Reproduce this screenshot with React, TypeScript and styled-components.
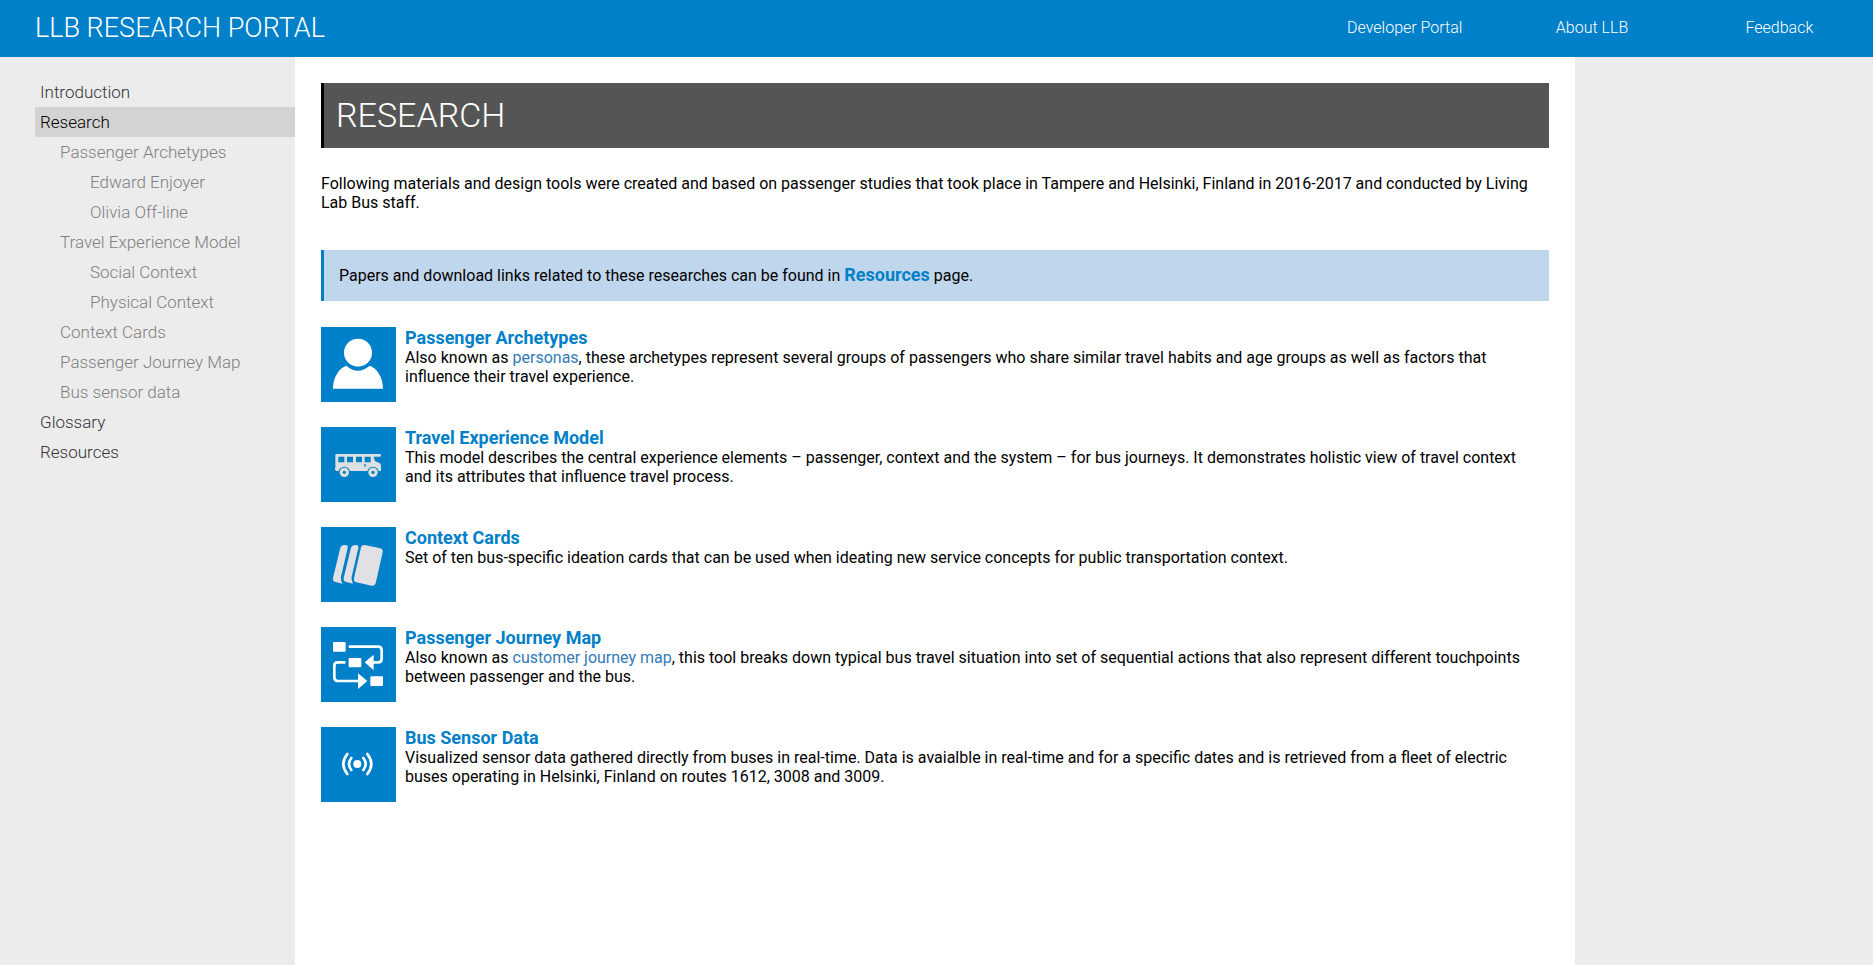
import React from "react";
import styled, { createGlobalStyle } from "styled-components";

const BLUE = "#0080c8";

const GlobalStyle = createGlobalStyle`
  * { box-sizing: border-box; }
  body {
    margin: 0;
    background: #ececec;
    font-family: Roboto, "Liberation Sans", sans-serif;
    font-size: 16px;
    line-height: 19px;
    color: #000;
  }
  a { text-decoration: none; }
`;

const Page = styled.div`
  min-height: 100vh;
  display: flex;
  flex-direction: column;
`;

const Header = styled.header`
  display: flex;
  align-items: center;
  height: 57px;
  background: ${BLUE};
`;

const Brand = styled.a`
  flex: 1;
  padding: 0 0 2px 35px;
  color: #fff;
  font-size: 27px;
  font-weight: 300;
  line-height: 32px;
`;

const TopNav = styled.nav`
  display: grid;
  grid-template-columns: repeat(3, 1fr);
  width: 30%;
  padding-bottom: 2px;
`;

const TopLink = styled.a`
  color: #fff;
  font-weight: 300;
  text-align: center;
`;

const Body = styled.div`
  flex: 1;
  display: flex;
`;

const Sidebar = styled.nav`
  flex: 0 0 295px;
  padding: 20px 0 20px 35px;
`;

const MenuLink = styled.a<{ $level: number; $active?: boolean }>`
  display: block;
  padding-left: ${(p) => [5, 25, 55][p.$level]}px;
  background: ${(p) => (p.$active ? "#d3d3d3" : "transparent")};
  color: ${(p) => (p.$active ? "#000" : p.$level === 0 ? "#333" : "#808080")};
  font-size: 17px;
  font-weight: 300;
  line-height: 30px;
`;

const Main = styled.main`
  flex: 0 1 1280px;
  padding: 26px;
  background: #fff;
`;

const Title = styled.h1`
  margin: 0 0 26px;
  padding: 12px;
  border-left: 3px solid #000;
  background: #555;
  color: #fff;
  font-size: 34px;
  font-weight: 300;
  line-height: 41px;
`;

const Intro = styled.p`
  margin: 0 0 38px;
`;

const Callout = styled.p`
  margin: 0 0 26px;
  padding: 16px 15px;
  border-left: 3px solid ${BLUE};
  background: #c0d6ec;
`;

const StrongLink = styled.a`
  color: ${BLUE};
  font-size: 18px;
  font-weight: 700;
  line-height: 16px;
`;

const TextLink = styled.a`
  color: #337ab7;
`;

const Topics = styled.div`
  display: flex;
  flex-direction: column;
  gap: 25px;
`;

const Topic = styled.article`
  display: flex;
  gap: 9px;
  padding-right: 20px;
`;

const Tile = styled.svg`
  flex: none;
  width: 75px;
  height: 75px;
  background: ${BLUE};
`;

const TopicTitle = styled.h2`
  margin: 0;
  font-size: 18px;
  line-height: 21px;
`;

const TopicText = styled.p`
  margin: 0;
`;

const PersonIcon = () => (
  <Tile viewBox="0 0 225 225" aria-hidden="true">
    <path d="M36 185C36 150 54 124 76 116Q110 146 146 116C168 124 186 150 186 185Z" fill="#fff" />
    <circle cx="111" cy="77" r="47" fill={BLUE} />
    <circle cx="111" cy="77" r="42" fill="#fff" />
  </Tile>
);

const BusIcon = () => (
  <Tile viewBox="0 0 225 225" aria-hidden="true">
    <path
      d="M46 81H176Q180 81 180 85T176 89H158L162 102L176 109Q180 111 180 115V132H46L42 128V121H45L43 118V85Q43 81 46 81Z"
      fill="#dde0e0"
    />
    <path d="M52 89h18v17H52zM78 89h18v17H78zM105 89h18v17H105zM131 89h18v17H131zM130 111h4v8h-4z" fill={BLUE} />
    {[70, 156].map((x) => (
      <g key={x}>
        <circle cx={x} cy="136" r="17" fill={BLUE} />
        <circle cx={x} cy="136" r="14" fill="#dde0e0" />
        <circle cx={x} cy="136" r="5" fill={BLUE} />
      </g>
    ))}
  </Tile>
);

const CardsIcon = () => (
  <Tile viewBox="0 0 225 225" fill="#e1e1e5" aria-hidden="true">
    <path d="M58 62Q61 54 69 54L77 55Q81 57 80 63L60 149Q58 160 64 170L44 165Q34 162 36 153Z" />
    <path d="M90 62Q93 54 101 54L109 55Q113 57 112 63L92 149Q90 160 96 170L76 165Q66 162 68 153Z" />
    <path d="M131 54L178 64Q187 67 185 76L164 169Q161 178 152 176L106 166Q97 163 99 154L120 61Q123 53 131 54Z" />
  </Tile>
);

const JourneyIcon = () => (
  <Tile viewBox="0 0 225 225" fill="#fff" aria-hidden="true">
    <rect x="36" y="45" width="38" height="29" rx="3" />
    <rect x="83" y="93" width="38" height="28" rx="3" />
    <rect x="148" y="148" width="38" height="29" rx="3" />
    <path
      d="M83 59H171Q182 59 182 70V95Q182 106 171 106H152M73 106H50Q40 106 40 116V151Q40 162 50 162H116"
      fill="none"
      stroke="#fff"
      strokeWidth="8"
    />
    <path d="M131 106L158 83V130ZM139 162L111 139V186Z" />
  </Tile>
);

const SensorIcon = () => (
  <Tile viewBox="0 0 225 225" fill="none" stroke="#fff" strokeWidth="8" strokeLinecap="round" aria-hidden="true">
    <circle cx="109" cy="111" r="12" fill="#fff" stroke="none" />
    <path d="M91 93Q77 111 91 129M127 93Q141 111 127 129M79 81Q55 111 79 141M139 81Q163 111 139 141" />
  </Tile>
);

const menu = [
  { label: "Introduction", level: 0 },
  { label: "Research", level: 0, active: true },
  { label: "Passenger Archetypes", level: 1 },
  { label: "Edward Enjoyer", level: 2 },
  { label: "Olivia Off-line", level: 2 },
  { label: "Travel Experience Model", level: 1 },
  { label: "Social Context", level: 2 },
  { label: "Physical Context", level: 2 },
  { label: "Context Cards", level: 1 },
  { label: "Passenger Journey Map", level: 1 },
  { label: "Bus sensor data", level: 1 },
  { label: "Glossary", level: 0 },
  { label: "Resources", level: 0 },
];

const topics = [
  {
    title: "Passenger Archetypes",
    icon: <PersonIcon />,
    text: (
      <>
        Also known as <TextLink href="#personas">personas</TextLink>, these archetypes represent several groups of
        passengers who share similar travel habits and age groups as well as factors that influence their travel
        experience.
      </>
    ),
  },
  {
    title: "Travel Experience Model",
    icon: <BusIcon />,
    text: "This model describes the central experience elements – passenger, context and the system – for bus journeys. It demonstrates holistic view of travel context and its attributes that influence travel process.",
  },
  {
    title: "Context Cards",
    icon: <CardsIcon />,
    text: "Set of ten bus-specific ideation cards that can be used when ideating new service concepts for public transportation context.",
  },
  {
    title: "Passenger Journey Map",
    icon: <JourneyIcon />,
    text: (
      <>
        Also known as <TextLink href="#journey">customer journey map</TextLink>, this tool breaks down typical bus
        travel situation into set of sequential actions that also represent different touchpoints between passenger
        and the bus.
      </>
    ),
  },
  {
    title: "Bus Sensor Data",
    icon: <SensorIcon />,
    text: "Visualized sensor data gathered directly from buses in real-time. Data is avaialble in real-time and for a specific dates and is retrieved from a fleet of electric buses operating in Helsinki, Finland on routes 1612, 3008 and 3009.",
  },
];

export default function App() {
  return (
    <Page>
      <GlobalStyle />
      <Header>
        <Brand href="#home">LLB RESEARCH PORTAL</Brand>
        <TopNav>
          <TopLink href="#developer">Developer Portal</TopLink>
          <TopLink href="#about">About LLB</TopLink>
          <TopLink href="#feedback">Feedback</TopLink>
        </TopNav>
      </Header>
      <Body>
        <Sidebar>
          {menu.map((item) => (
            <MenuLink key={item.label} href="#" $level={item.level} $active={item.active}>
              {item.label}
            </MenuLink>
          ))}
        </Sidebar>
        <Main>
          <Title>RESEARCH</Title>
          <Intro>
            Following materials and design tools were created and based on passenger studies that took place in Tampere
            and Helsinki, Finland in 2016-2017 and conducted by Living Lab Bus staff.
          </Intro>
          <Callout>
            Papers and download links related to these researches can be found in{" "}
            <StrongLink href="#resources">Resources</StrongLink> page.
          </Callout>
          <Topics>
            {topics.map((topic) => (
              <Topic key={topic.title}>
                {topic.icon}
                <div>
                  <TopicTitle>
                    <StrongLink href="#">{topic.title}</StrongLink>
                  </TopicTitle>
                  <TopicText>{topic.text}</TopicText>
                </div>
              </Topic>
            ))}
          </Topics>
        </Main>
      </Body>
    </Page>
  );
}
